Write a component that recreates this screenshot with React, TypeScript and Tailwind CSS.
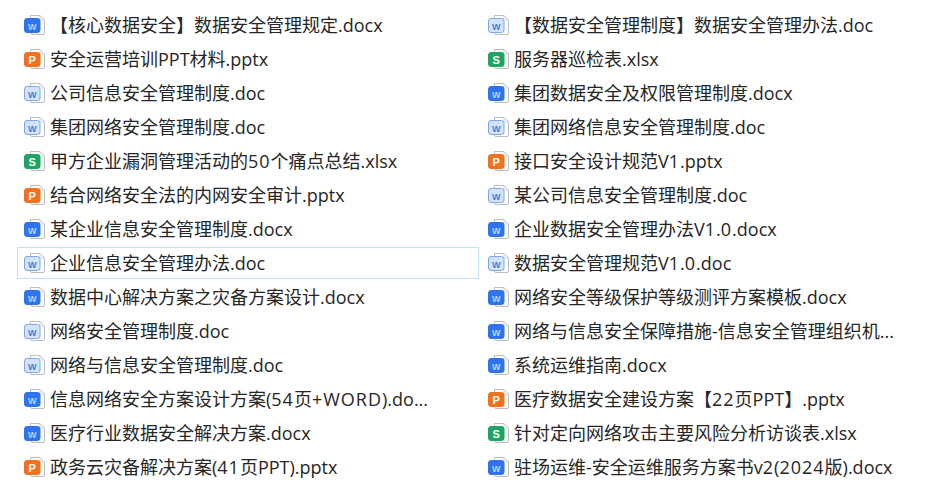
type Kind = "docx" | "doc" | "pptx" | "xlsx";

const rows: [string, string][] = [
  ["【核心数据安全】数据安全管理规定.docx", "【数据安全管理制度】数据安全管理办法.doc"],
  ["安全运营培训PPT材料.pptx", "服务器巡检表.xlsx"],
  ["公司信息安全管理制度.doc", "集团数据安全及权限管理制度.docx"],
  ["集团网络安全管理制度.doc", "集团网络信息安全管理制度.doc"],
  ["甲方企业漏洞管理活动的50个痛点总结.xlsx", "接口安全设计规范V1.pptx"],
  ["结合网络安全法的内网安全审计.pptx", "某公司信息安全管理制度.doc"],
  ["某企业信息安全管理制度.docx", "企业数据安全管理办法V1.0.docx"],
  ["企业信息安全管理办法.doc", "数据安全管理规范V1.0.doc"],
  ["数据中心解决方案之灾备方案设计.docx", "网络安全等级保护等级测评方案模板.docx"],
  ["网络安全管理制度.doc", "网络与信息安全保障措施-信息安全管理组织机..."],
  ["网络与信息安全管理制度.doc", "系统运维指南.docx"],
  ["信息网络安全方案设计方案(54页+WORD).do...", "医疗数据安全建设方案【22页PPT】.pptx"],
  ["医疗行业数据安全解决方案.docx", "针对定向网络攻击主要风险分析访谈表.xlsx"],
  ["政务云灾备解决方案(41页PPT).pptx", "驻场运维-安全运维服务方案书v2(2024版).docx"],
];

const kindOf = (name: string): Kind => {
  if (name.endsWith(".pptx")) return "pptx";
  if (name.endsWith(".xlsx")) return "xlsx";
  if (name.endsWith(".doc")) return "doc";
  return "docx";
};

const badge: Record<Kind, { fill: string; ink: string; letter: string; stroke: string }> = {
  docx: { fill: "#2f74ee", ink: "#bcd4ff", letter: "W", stroke: "#2f74ee" },
  doc: { fill: "#d3e3f9", ink: "#3f7fd8", letter: "W", stroke: "#7fa9e6" },
  pptx: { fill: "#f0711f", ink: "#ffffff", letter: "P", stroke: "#f0711f" },
  xlsx: { fill: "#1fa463", ink: "#ffffff", letter: "S", stroke: "#1fa463" },
};

const FileIcon = ({ kind }: { kind: Kind }) => {
  const b = badge[kind];

  return (
    <svg width="22" height="22" viewBox="0 0 22 22" className="shrink-0">
      <path
        d="M6.5 1.5H16L20.5 6V19A1.5 1.5 0 0 1 19 20.5H8A1.5 1.5 0 0 1 6.5 19Z"
        fill="#fff"
        stroke="#bdbdbd"
      />
      <path d="M16 1.5V4.5A1.5 1.5 0 0 0 17.5 6H20.5" fill="none" stroke="#d4d4d4" />
      <rect x="0.5" y="4.5" width="15.5" height="14" rx="2.5" fill={b.fill} stroke={b.stroke} />
      <text
        x="8.2"
        y="15.5"
        textAnchor="middle"
        fontSize={kind === "docx" || kind === "doc" ? 9 : 11}
        fontWeight="700"
        fontFamily="'Liberation Sans', sans-serif"
        fill={b.ink}
      >
        {b.letter}
      </text>
    </svg>
  );
};

// digits and capitals run a bit wider in the original font
const FileName = ({ name }: { name: string }) => (
  <span className="text-[18px] leading-[32px] text-[#262626]">
    {name.split(/([0-9+]+|WORD)/).map((part, idx) =>
      idx % 2 === 1 ? (
        <span key={idx} className="tracking-[1px]">
          {part}
        </span>
      ) : (
        part
      ),
    )}
  </span>
);

const FileRow = ({ name, selected }: { name: string; selected?: boolean }) => (
  <div
    className={`flex items-center gap-[4px] h-[32px] pl-[6px] border whitespace-nowrap ${
      selected ? "border-[#bfe3f5]" : "border-transparent"
    }`}
  >
    <FileIcon kind={kindOf(name)} />
    <FileName name={name} />
  </div>
);

const App = () => {
  return (
    <div className="w-[936px] h-[501px] overflow-hidden bg-white pl-[17px] pt-[9px] font-['Open_Sans','Noto_Sans_CJK_SC',sans-serif]">
      <div className="grid grid-cols-[462px_440px] gap-x-[2px] gap-y-[2px]">
        {rows.map(([left, right], idx) => (
          <div key={left} className="contents">
            <FileRow name={left} selected={idx === 7} />
            <FileRow name={right} />
          </div>
        ))}
      </div>
    </div>
  );
};

export default App;
